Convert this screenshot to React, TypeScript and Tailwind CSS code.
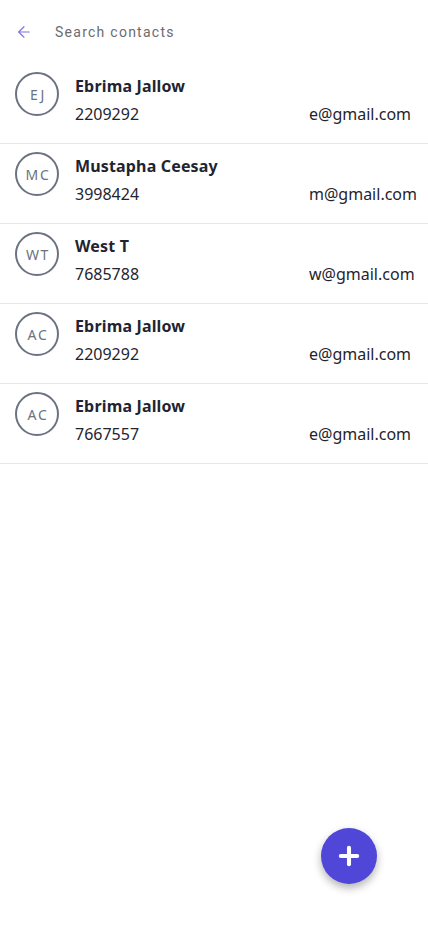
import React from "react";
import { ArrowLeft, Plus } from "lucide-react";

interface Contact {
  initials: string;
  name: string;
  phone: string;
  email: string;
}

const contacts: Contact[] = [
  { initials: "EJ", name: "Ebrima Jallow", phone: "2209292", email: "e@gmail.com" },
  { initials: "MC", name: "Mustapha Ceesay", phone: "3998424", email: "m@gmail.com" },
  { initials: "WT", name: "West T", phone: "7685788", email: "w@gmail.com" },
  { initials: "AC", name: "Ebrima Jallow", phone: "2209292", email: "e@gmail.com" },
  { initials: "AC", name: "Ebrima Jallow", phone: "7667557", email: "e@gmail.com" },
];

const ContactRow = ({ contact }: { contact: Contact }) => (
  <li className="flex h-20 items-start border-b border-[#e5e7eb] pl-[15px] pt-2">
    <div className="flex h-[44px] w-[44px] shrink-0 items-center justify-center rounded-full border-2 border-[#6b7280]">
      <span className="pl-[2px] text-[14px] tracking-[0.12em] text-[#6b7280]">
        {contact.initials}
      </span>
    </div>
    <div className="ml-4 mt-1 flex flex-1 flex-col gap-2">
      <span className="text-[16px] font-bold leading-5 tracking-[0.01em] text-[#1f2430]">
        {contact.name}
      </span>
      <div className="grid grid-cols-[234px_1fr] text-[16px] leading-5 text-[#1f2430]">
        <span>{contact.phone}</span>
        <span>{contact.email}</span>
      </div>
    </div>
  </li>
);

export default function App() {
  return (
    <div
      className="relative min-h-[926px] w-full bg-white"
      style={{ fontFamily: '"Noto Sans", "Open Sans", sans-serif' }}
    >
      {/* Search header */}
      <header className="flex h-16 items-center pl-[15px]">
        <ArrowLeft className="h-[18px] w-[18px] text-[#7b6fe3]" strokeWidth={1.5} />
        <input
          className="ml-[22px] flex-1 bg-transparent text-[14px] tracking-[0.09em] text-[#6b6b70] outline-none placeholder:text-[#6b6b70]"
          style={{ fontFamily: "Roboto, sans-serif" }}
          placeholder="Search contacts"
        />
      </header>

      <ul>
        {contacts.map((c, i) => (
          <ContactRow key={i} contact={c} />
        ))}
      </ul>

      {/* Add contact button */}
      <button className="absolute left-[321px] top-[828px] flex h-14 w-14 items-center justify-center rounded-full bg-[#5046d8] shadow-[0_4px_8px_rgba(0,0,0,0.3)]">
        <Plus className="h-7 w-7 text-white" strokeWidth={3.5} />
      </button>
    </div>
  );
}
